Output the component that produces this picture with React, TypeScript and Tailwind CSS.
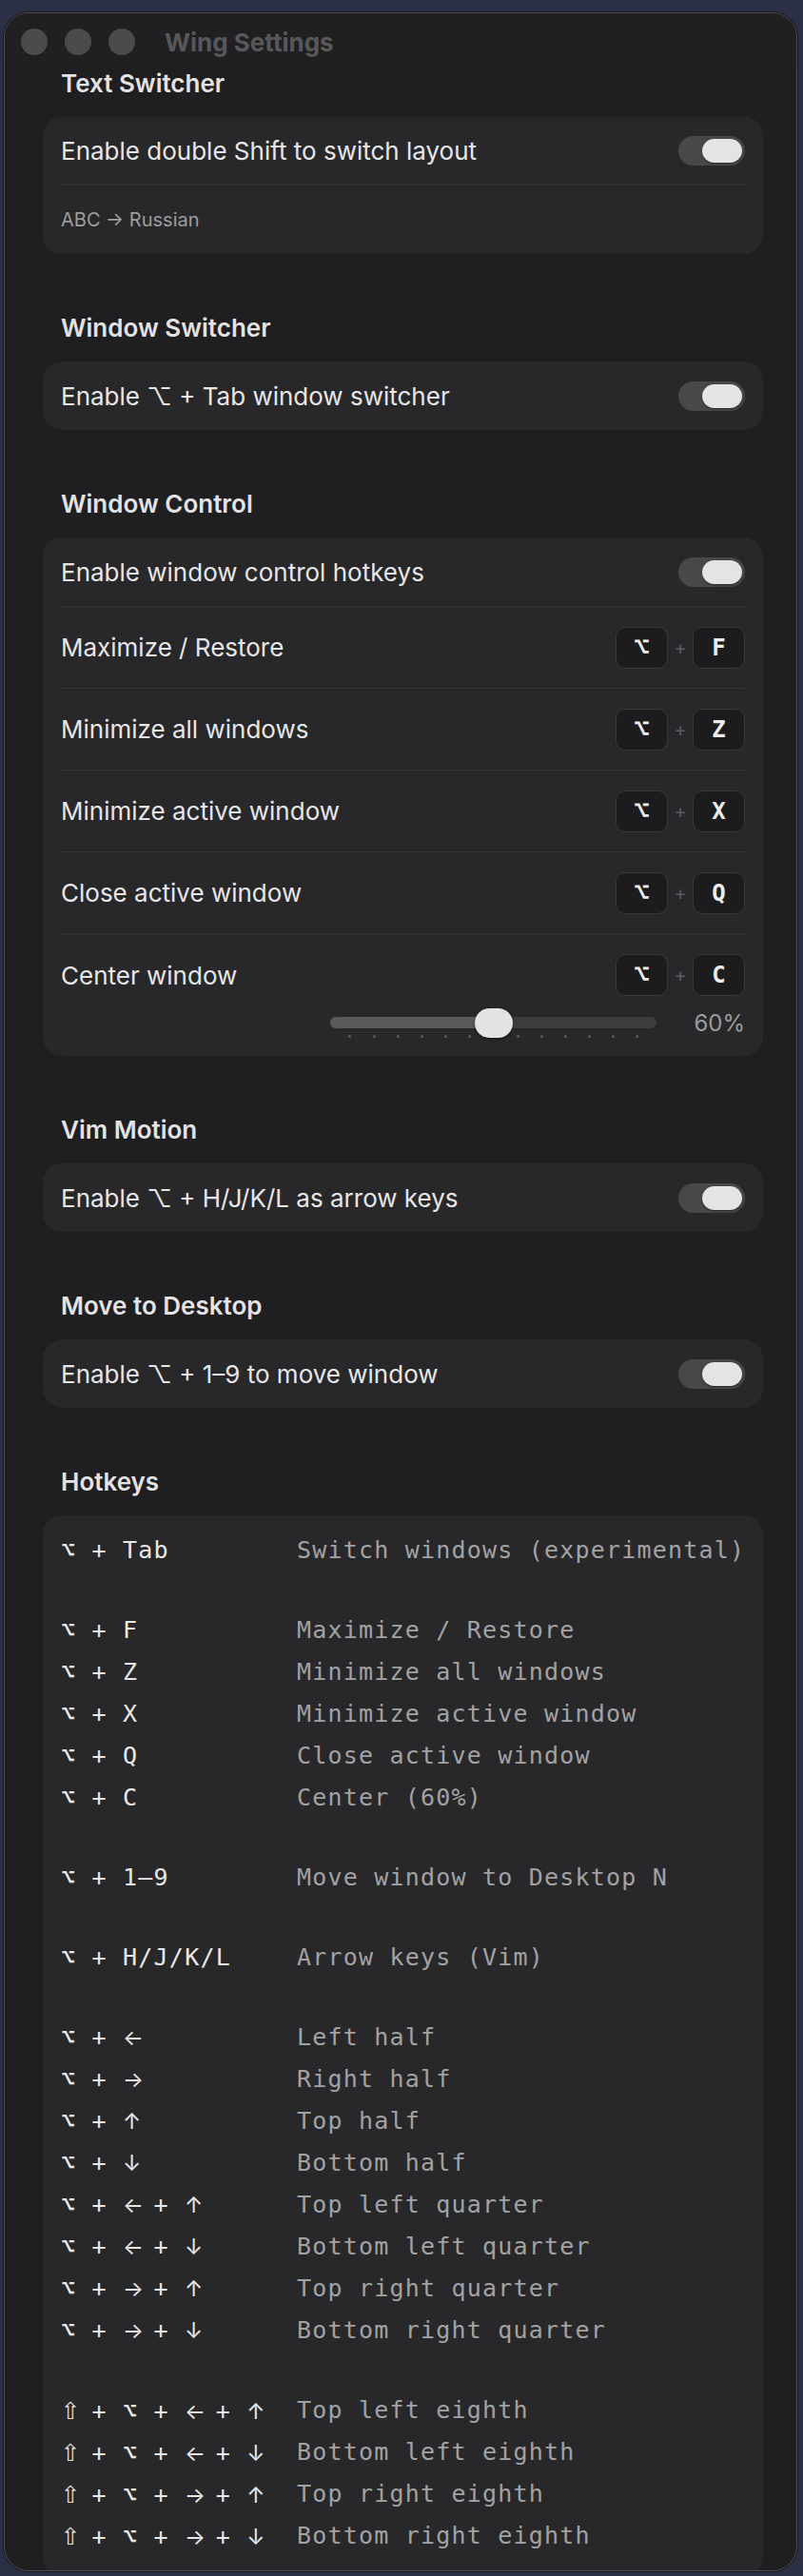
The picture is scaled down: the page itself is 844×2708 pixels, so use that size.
import React from 'react';

const hotkeys: ([string, string] | null)[] = [
  ['⌥ + Tab', 'Switch windows (experimental)'],
  null,
  ['⌥ + F', 'Maximize / Restore'],
  ['⌥ + Z', 'Minimize all windows'],
  ['⌥ + X', 'Minimize active window'],
  ['⌥ + Q', 'Close active window'],
  ['⌥ + C', 'Center (60%)'],
  null,
  ['⌥ + 1–9', 'Move window to Desktop N'],
  null,
  ['⌥ + H/J/K/L', 'Arrow keys (Vim)'],
  null,
  ['⌥ + ←', 'Left half'],
  ['⌥ + →', 'Right half'],
  ['⌥ + ↑', 'Top half'],
  ['⌥ + ↓', 'Bottom half'],
  ['⌥ + ← + ↑', 'Top left quarter'],
  ['⌥ + ← + ↓', 'Bottom left quarter'],
  ['⌥ + → + ↑', 'Top right quarter'],
  ['⌥ + → + ↓', 'Bottom right quarter'],
  null,
  ['⇧ + ⌥ + ← + ↑', 'Top left eighth'],
  ['⇧ + ⌥ + ← + ↓', 'Bottom left eighth'],
  ['⇧ + ⌥ + → + ↑', 'Top right eighth'],
  ['⇧ + ⌥ + → + ↓', 'Bottom right eighth'],
];

const windowControls = [
  { label: 'Maximize / Restore', key: 'F' },
  { label: 'Minimize all windows', key: 'Z' },
  { label: 'Minimize active window', key: 'X' },
  { label: 'Close active window', key: 'Q' },
];

function Toggle() {
  return (
    <div className="flex h-[31px] w-[70px] items-center justify-end rounded-full bg-[#48484b] px-[3px]">
      <div className="h-[25px] w-[42px] rounded-full bg-[#e4e4e4] shadow-[0_1px_2px_rgba(0,0,0,0.45)]" />
    </div>
  );
}

function Key({ k }: { k: string }) {
  return (
    <div
      className={
        k === '⌥'
          ? "flex h-[44px] w-[55px] items-center justify-center rounded-[10px] border border-[#38383b] bg-[#1c1c1e] font-['DejaVu_Sans_Mono',monospace] text-[29px] text-[#ececec]"
          : "flex h-[44px] w-[55px] items-center justify-center rounded-[10px] border border-[#38383b] bg-[#1c1c1e] font-['DejaVu_Sans_Mono',monospace] text-[24px] font-bold text-[#ececec]"
      }
    >
      {k}
    </div>
  );
}

function Combo({ k }: { k: string }) {
  return (
    <div className="flex items-center">
      <Key k="⌥" />
      <span className="w-[26px] text-center text-[20px] text-[#5c5c5f]">+</span>
      <Key k={k} />
    </div>
  );
}

// arrows and shift get their own font so they look like the reference glyphs
function KeyText({ text }: { text: string }) {
  return (
    <>
      {Array.from(text).map((ch, i) => {
        if ('←→↑↓'.includes(ch)) {
          return (
            <span
              key={i}
              className="inline-block w-[16.25px] text-center font-['Inter',sans-serif] text-[23px] leading-none tracking-normal"
            >
              {ch}
            </span>
          );
        }
        if (ch === '⇧') {
          return (
            <span key={i} className="inline-block w-[16.25px] text-center text-[33px] leading-none tracking-normal">
              {ch}
            </span>
          );
        }
        return ch;
      })}
    </>
  );
}

function Heading({ children, first }: { children: React.ReactNode; first?: boolean }) {
  return (
    <h2
      className={
        first
          ? 'mb-[20px] flex h-8 items-center pl-[19px] text-[26px] font-semibold text-[#e3e3e5]'
          : 'mt-[61px] mb-[20px] flex h-8 items-center pl-[19px] text-[26px] font-semibold text-[#e3e3e5]'
      }
    >
      {children}
    </h2>
  );
}

function ToggleCard({ label }: { label: string }) {
  return (
    <div className="flex h-[72px] items-center justify-between rounded-[20px] bg-[#28282a] px-[19px]">
      <span className="text-[26px] text-[#e6e6e8]">{label}</span>
      <Toggle />
    </div>
  );
}

function Slider() {
  const ticks = Array.from({ length: 13 });
  return (
    <div className="relative h-[31px] w-[343px]">
      <div className="absolute top-[9px] left-0 h-[12px] w-full overflow-hidden rounded-full bg-[#3d3d40]">
        <div className="h-full w-[172px] bg-[#5a5a5d]" />
      </div>
      <div className="absolute top-[28px] right-[19px] left-[19px] flex justify-between">
        {ticks.map((_, i) => (
          <span key={i} className="h-[3px] w-[3px] rounded-full bg-[#5e5e61]" />
        ))}
      </div>
      <div className="absolute top-0 left-[152px] h-[31px] w-[40px] rounded-full bg-[#e3e3e3] shadow-[0_1px_3px_rgba(0,0,0,0.5)]" />
    </div>
  );
}

export default function App() {
  return (
    <div className="min-h-screen bg-[#2c3044] pt-[13px] pl-[4px] font-['Inter','Noto_Sans',sans-serif]">
      <div className="flex h-[2690px] w-[834px] flex-col overflow-hidden rounded-[26px] border border-[#4f4f54] bg-[#1f1f21] shadow-[0_0_0_1px_rgba(0,0,0,0.5)]">
        {/* Title bar */}
        <div className="flex h-[57px] shrink-0 items-center gap-[18px] bg-[#202022] pt-[3px] pl-[17px]">
          <span className="h-[28px] w-[28px] rounded-full bg-[#4b4b4e]" />
          <span className="h-[28px] w-[28px] rounded-full bg-[#4b4b4e]" />
          <span className="h-[28px] w-[28px] rounded-full bg-[#4b4b4e]" />
          <span className="ml-[13px] text-[26px] font-bold text-[#58585b]">Wing Settings</span>
        </div>

        <div className="pr-[35px] pl-[40px]">
          {/* Text Switcher */}
          <Heading first>Text Switcher</Heading>
          <div className="rounded-[20px] bg-[#28282a] px-[19px]">
            <div className="flex h-[72px] items-center justify-between border-b border-[#343437]">
              <span className="text-[26px] text-[#e6e6e8]">Enable double Shift to switch layout</span>
              <Toggle />
            </div>
            <div className="flex h-[72px] items-center text-[20px] text-[#9c9c9f]">ABC → Russian</div>
          </div>

          {/* Window Switcher */}
          <Heading>Window Switcher</Heading>
          <ToggleCard label="Enable ⌥ + Tab window switcher" />

          {/* Window Control */}
          <Heading>Window Control</Heading>
          <div className="rounded-[20px] bg-[#28282a] px-[19px]">
            <div className="flex h-[73px] items-center justify-between border-b border-[#343437]">
              <span className="text-[26px] text-[#e6e6e8]">Enable window control hotkeys</span>
              <Toggle />
            </div>
            {windowControls.map((row) => (
              <div
                key={row.key}
                className="flex h-[86px] items-center justify-between border-b border-[#343437]"
              >
                <span className="text-[26px] text-[#e6e6e8]">{row.label}</span>
                <Combo k={row.key} />
              </div>
            ))}
            <div className="pt-[21px] pb-[19px]">
              <div className="flex h-[44px] items-center justify-between">
                <span className="text-[26px] text-[#e6e6e8]">Center window</span>
                <Combo k="C" />
              </div>
              <div className="mt-[13px] flex h-[31px] items-center justify-end gap-[39px]">
                <Slider />
                <span className="text-[24px] text-[#9c9c9f]">60%</span>
              </div>
            </div>
          </div>

          {/* Vim Motion */}
          <Heading>Vim Motion</Heading>
          <ToggleCard label="Enable ⌥ + H/J/K/L as arrow keys" />

          {/* Move to Desktop */}
          <Heading>Move to Desktop</Heading>
          <ToggleCard label="Enable ⌥ + 1–9 to move window" />

          {/* Hotkeys */}
          <Heading>Hotkeys</Heading>
          <div className="rounded-[20px] bg-[#28282a] pt-[15px] pb-[20px] pl-[19px] font-['DejaVu_Sans_Mono',monospace] text-[25px] tracking-[1.2px]">
            {hotkeys.map((row, i) =>
              row ? (
                <div key={i} className="grid h-[44px] grid-cols-[248px_1fr] items-center whitespace-pre">
                  <span className="text-[#e8e8e8]">
                    <KeyText text={row[0]} />
                  </span>
                  <span className="text-[#a2a2a5]">{row[1]}</span>
                </div>
              ) : (
                <div key={i} className="h-[40px]" />
              )
            )}
          </div>
        </div>
      </div>
    </div>
  );
}
